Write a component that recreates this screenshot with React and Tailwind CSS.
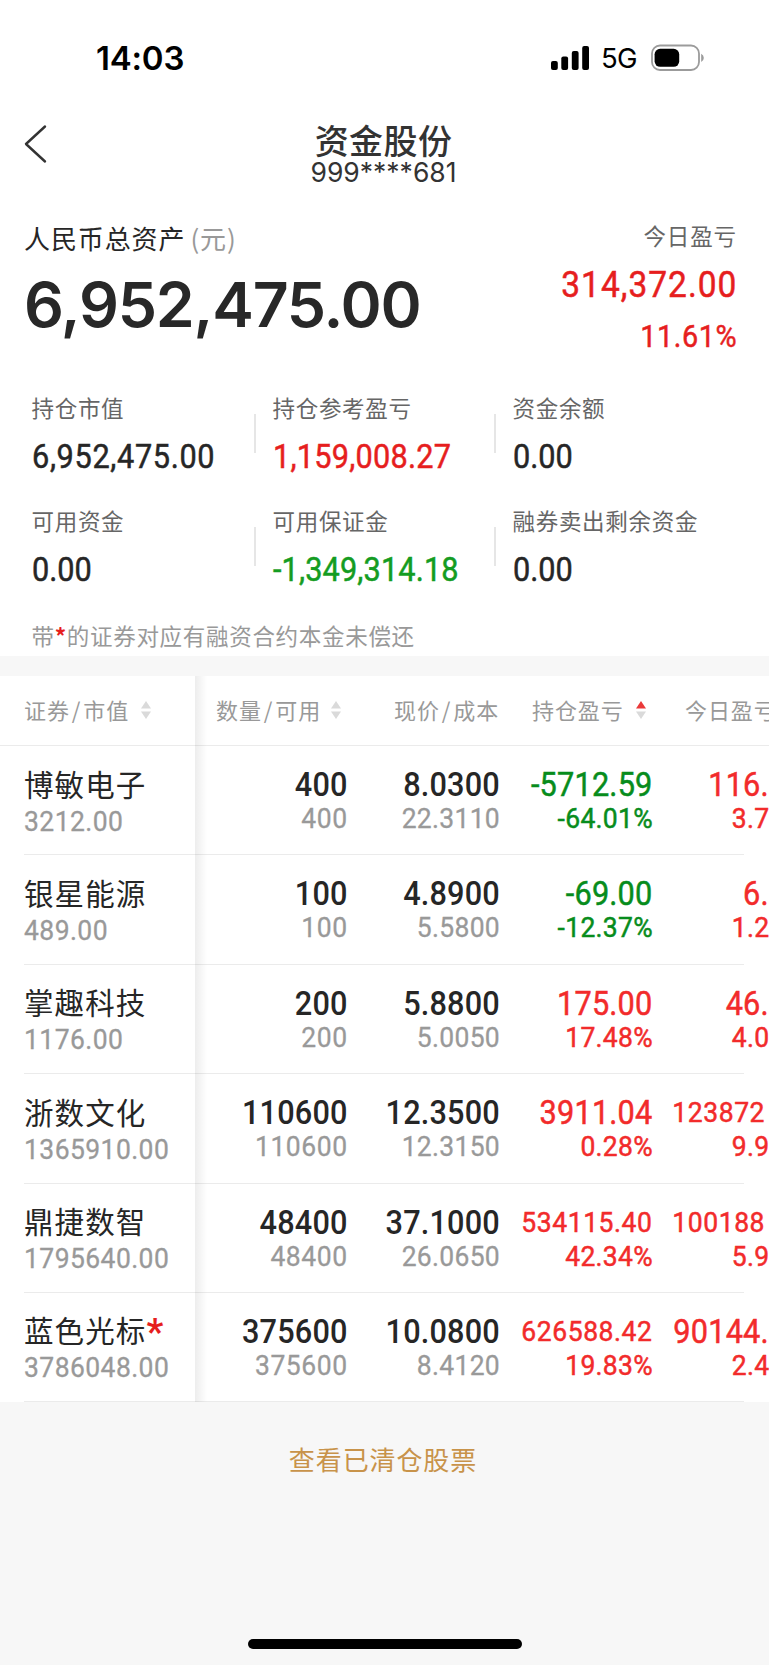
import React from "react";

const CJK = "font-['Noto_Sans_CJK_SC',sans-serif]";
const NUM = "font-['Roboto',sans-serif] scale-x-93 whitespace-nowrap";
const SEMI = "[-webkit-text-stroke:0.5px_currentColor]";
const THIN = "[-webkit-text-stroke:0.3px_currentColor]";
const SF = "font-['Inter',sans-serif]";

const RED = "text-[#f22b2b]";
const GREEN = "text-[#078c1c]";

const summary = [
  [
    { label: "持仓市值", value: "6,952,475.00", color: "text-[#262626] tracking-[0.7px]" },
    { label: "持仓参考盈亏", value: "1,159,008.27", color: "text-[#e61e1e] tracking-[0.25px]" },
    { label: "资金余额", value: "0.00", color: "text-[#262626]" },
  ],
  [
    { label: "可用资金", value: "0.00", color: "text-[#262626]" },
    { label: "可用保证金", value: "-1,349,314.18", color: "text-[#149c22] tracking-[0.15px]" },
    { label: "融券卖出剩余资金", value: "0.00", color: "text-[#262626]" },
  ],
];

const holdings = [
  { name: "博敏电子", mv: "3212.00", qty: "400", price: "8.0300", cost: "22.3110", pl: "-5712.59", pct: "-64.01%", color: GREEN, day: "116.", dayPct: "3.7" },
  { name: "银星能源", mv: "489.00", qty: "100", price: "4.8900", cost: "5.5800", pl: "-69.00", pct: "-12.37%", color: GREEN, day: "6.", dayPct: "1.2" },
  { name: "掌趣科技", mv: "1176.00", qty: "200", price: "5.8800", cost: "5.0050", pl: "175.00", pct: "17.48%", color: RED, day: "46.", dayPct: "4.0" },
  { name: "浙数文化", mv: "1365910.00", qty: "110600", price: "12.3500", cost: "12.3150", pl: "3911.04", pct: "0.28%", color: RED, day: "123872", dayPct: "9.9", daySmall: true },
  { name: "鼎捷数智", mv: "1795640.00", qty: "48400", price: "37.1000", cost: "26.0650", pl: "534115.40", pct: "42.34%", color: RED, plSmall: true, day: "100188", dayPct: "5.9", daySmall: true },
  { name: "蓝色光标", star: true, mv: "3786048.00", qty: "375600", price: "10.0800", cost: "8.4120", pl: "626588.42", pct: "19.83%", color: RED, plSmall: true, day: "90144.", dayPct: "2.4" },
];

function StatusBar() {
  return (
    <div className="flex h-[115px] items-center pl-[96px] pr-[65px]">
      <div className={`${SF} mt-[2px] text-[33px] font-semibold text-black tracking-[-0.2px]`}>14:03</div>
      <div className="ml-auto flex items-center">
        <svg width="38" height="24" viewBox="0 0 38 24" fill="#000">
          <rect x="0" y="15" width="6.8" height="9" rx="2" />
          <rect x="10.3" y="10.5" width="6.8" height="13.5" rx="2" />
          <rect x="20.8" y="5" width="6.8" height="19" rx="2" />
          <rect x="31.2" y="0" width="6.8" height="24" rx="2" />
        </svg>
        <div className={`${SF} ml-[12px] mr-[11px] mt-[2px] w-[38px] whitespace-nowrap text-[27.5px] tracking-[-0.6px] text-black`}>5G</div>
        <svg width="54" height="28" viewBox="0 0 54 28">
          <rect x="2" y="1.5" width="47" height="24.5" rx="8" fill="none" stroke="#9b9b9b" strokeWidth="1.8" />
          <rect x="4.6" y="4.8" width="24.6" height="18" rx="5.5" fill="#000" />
          <path d="M51.2 9.8 q2.6 1.4 2.6 4.1 t-2.6 4.1 z" fill="#9b9b9b" />
        </svg>
      </div>
    </div>
  );
}

function NavBar() {
  return (
    <div className="flex h-[70px] pt-[4px]">
      <div className="w-[119px] pl-[23px] pt-[5px]">
        <svg width="26" height="40" viewBox="0 0 26 40" fill="none" stroke="#333" strokeWidth="2.4" strokeLinecap="round" strokeLinejoin="round">
          <path d="M22 2.5 L3 20 L22 37.5" />
        </svg>
      </div>
      <div className="flex flex-1 flex-col items-center pt-px text-[#333]">
        <div className={`${CJK} text-[34px] font-medium leading-[39px] tracking-[0.4px]`}>资金股份</div>
        <div className={`${SF} text-[26.5px] leading-[26px]`}>999****681</div>
      </div>
      <div className="w-[121px]" />
    </div>
  );
}

function Assets() {
  return (
    <div className="flex h-[208px] justify-between pl-[24px] pr-[32px] pt-[36px]">
      <div>
        <div className={`${CJK} mt-px text-[26px] leading-[32px] tracking-[0.9px] text-[#262626]`}>
          人民币总资产<span className="ml-[5px] text-[#999]">(元)</span>
        </div>
        <div className={`${SF} mt-[18px] text-[62.5px] font-semibold leading-[64px] tracking-[-1.2px] text-[#282828]`}>6,952,475.00</div>
      </div>
      <div className="flex flex-col items-end">
        <div className={`${CJK} text-[22.5px] leading-[28px] tracking-[0.9px] text-[#666]`}>今日盈亏</div>
        <div className={`${NUM} ${SEMI} mt-[18px] origin-right text-[36px] leading-[36px] tracking-[1.1px] text-[#e61e1e]`}>314,372.00</div>
        <div className={`${NUM} ${SEMI} mt-[16px] origin-right text-[31px] leading-[36px] tracking-[0.6px] text-[#e61e1e]`}>11.61%</div>
      </div>
    </div>
  );
}

function Summary() {
  return (
    <div className="h-[263px]">
      {summary.map((row, r) => (
        <div key={r} className="grid h-[113px] grid-cols-[256px_240px_1fr]">
          {row.map((c, i) => (
            <div key={c.label} className={`flex justify-between ${i === 0 ? "pl-[31.5px]" : "pl-[16.5px]"}`}>
              <div className="whitespace-nowrap">
                <div className={`${CJK} text-[22.5px] leading-[28px] tracking-[0.7px] text-[#666]`}>{c.label}</div>
                <div className={`${NUM} ${SEMI} mt-[18px] origin-left text-[33px] leading-[36px] ${c.color}`}>{c.value}</div>
              </div>
              {i < 2 && <div className="mt-[21px] h-[39px] w-[2px] bg-[#e6e6e6]" />}
            </div>
          ))}
        </div>
      ))}
      <div className={`${CJK} mt-[2px] pl-[31.5px] text-[22.5px] leading-[28px] tracking-[0.7px] text-[#999]`}>
        带<span className="font-bold text-[#e61e1e]">*</span>的证券对应有融资合约本金未偿还
      </div>
    </div>
  );
}

function Sort({ active }) {
  return (
    <svg width="10" height="18" viewBox="0 0 10 18" className="shrink-0">
      <path d="M5 0 L10 7.6 H0 Z" fill={active ? "#ea3a3a" : "#dadada"} />
      <path d="M5 18 L10 10.4 H0 Z" fill="#dadada" />
    </svg>
  );
}

const HEAD = "flex items-center h-[69px] pb-[2px] whitespace-nowrap text-[22px] tracking-[0.9px] text-[#999]";

function Table() {
  return (
    <div className="flex bg-white">
      <div className="w-[195px] shrink-0">
        <div className="border-b border-[#ebebeb]">
          <div className={`${CJK} ${HEAD} pl-[24px]`}>
            <span className="w-[116.5px]">证券<span className="mx-[2px]">/</span>市值</span>
            <Sort />
          </div>
        </div>
        {holdings.map((h) => (
          <div key={h.name} className="ml-[24px] h-[109.4px] whitespace-nowrap border-b border-[#ebebeb] pt-[18.5px]">
            <div className={`${CJK} flex h-[36px] text-[29.5px] leading-[36px] tracking-[1.1px] text-[#262626]`}>
              {h.name}
              {h.star && <span className="mt-[3px] font-['Roboto',sans-serif] text-[37px] font-bold text-[#e61e1e]">*</span>}
            </div>
            <div className={`${NUM} ${THIN} mt-[7px] origin-left text-[28.5px] leading-[28px] tracking-[0.45px] text-[#999]`}>{h.mv}</div>
          </div>
        ))}
      </div>
      <div className="z-10 -mr-[12px] w-[12px] shrink-0 bg-linear-to-r from-black/7 to-transparent" />
      <div className="min-w-0 flex-1">
        <div className="border-b border-[#ebebeb]">
          <div className={`${CJK} ${HEAD} overflow-hidden`}>
            <span className="w-[136px] shrink-0 pl-[21px]">数量<span className="mx-[2px]">/</span>可用</span>
            <Sort />
            <span className="w-[191px] shrink-0 pl-[53px]">现价<span className="mx-[2px]">/</span>成本</span>
            <span className="w-[104px] shrink-0">持仓盈亏</span>
            <Sort active />
            <span className="ml-[39px]">今日盈亏</span>
          </div>
        </div>
        {holdings.map((h) => (
          <div key={h.name} className="h-[109.4px]">
            <div className="mr-[24.6px] h-full border-b border-[#ebebeb]">
              <div className="-mr-[24.6px] flex pt-[21px] text-right text-[33px] leading-[36px] tracking-[0.2px]">
                <div className={`${NUM} w-[152.7px] shrink-0 origin-right font-medium text-[#262626]`}>{h.qty}</div>
                <div className={`${NUM} w-[152px] shrink-0 origin-right font-medium text-[#262626]`}>{h.price}</div>
                <div className={`${NUM} ${SEMI} w-[152.5px] shrink-0 origin-right ${h.color} ${h.plSmall ? "text-[28.5px] tracking-[0.6px]" : ""}`}>{h.pl}</div>
                <div className={`${NUM} ${SEMI} flex-1 origin-right ${RED} ${h.daySmall ? "pr-[4px] text-[28.5px] tracking-[0.6px]" : ""}`}>{h.day}</div>
              </div>
              <div className="-mr-[24.6px] mt-[2px] flex text-right text-[28.5px] leading-[28px] tracking-[0.3px]">
                <div className={`${NUM} ${THIN} w-[152.7px] shrink-0 origin-right tracking-[0.6px] text-[#999]`}>{h.qty}</div>
                <div className={`${NUM} ${THIN} w-[152px] shrink-0 origin-right text-[#999]`}>{h.cost}</div>
                <div className={`${NUM} ${SEMI} w-[152.9px] shrink-0 origin-right ${h.color}`}>{h.pct}</div>
                <div className={`${NUM} ${SEMI} flex-1 origin-right ${RED}`}>{h.dayPct}</div>
              </div>
            </div>
          </div>
        ))}
      </div>
    </div>
  );
}

export default function App() {
  return (
    <div className="flex h-[1665px] w-[769px] flex-col overflow-hidden bg-[#f7f7f7]">
      <div className="h-[656px] shrink-0 bg-white">
        <StatusBar />
        <NavBar />
        <Assets />
        <Summary />
      </div>
      <div className="h-[20px] shrink-0" />
      <Table />
      <div className={`${CJK} mt-[40px] pr-[3px] text-center text-[26px] leading-[34px] tracking-[0.9px] text-[#c8934a]`}>查看已清仓股票</div>
      <div className="mx-auto mb-[16px] mt-auto h-[10px] w-[274px] rounded-full bg-black" />
    </div>
  );
}
